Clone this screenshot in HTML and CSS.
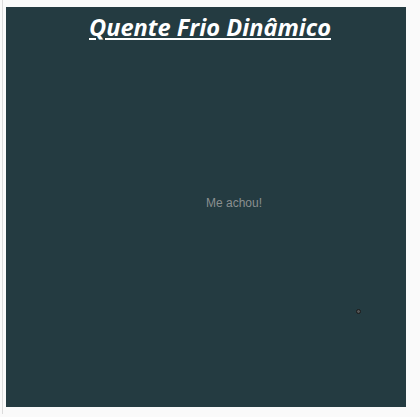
FILE: index.html
```html
<!DOCTYPE html>
<html lang="pt">
<head>
<meta charset="utf-8">
<link rel="stylesheet" href="styles.css">
</head>
<body>
<div class="edge"></div>
<div class="board">
  <span class="found">Me achou!</span>
  <span class="dot"></span>
</div>
<h1 class="title">Quente Frio Dinâmico</h1>
</body>
</html>
```
FILE: styles.css
```css
html, body {
  margin: 0;
  padding: 0;
  background: #fafafa;
  height: 417px;
  overflow: hidden;
}
body {
  position: relative;
  padding: 7px 0 0 6px;
  box-sizing: border-box;
}
.edge {
  position: absolute;
  left: 2px;
  top: 0;
  width: 1px;
  height: 414px;
  background: #dcdcdc;
}
.board {
  position: relative;
  width: 400px;
  height: 400px;
  background: #243b41;
}
.found {
  position: absolute;
  left: 200px;
  top: 189px;
  font-family: "Liberation Sans", Arial, sans-serif;
  font-size: 12px;
  color: #8a8f90;
}
.dot {
  position: absolute;
  left: 350px;
  top: 302px;
  width: 3px;
  height: 3px;
  border-radius: 50%;
  background: #555;
  border: 1px solid #1a1a1a;
}
.title {
  position: absolute;
  top: 12px;
  left: 0;
  right: 0;
  margin: 0;
  text-align: center;
  font-family: "Open Sans", sans-serif;
  font-style: italic;
  font-weight: 700;
  font-size: 23.6px;
  line-height: 30px;
  color: #ffffff;
  text-decoration: underline;
}
```
